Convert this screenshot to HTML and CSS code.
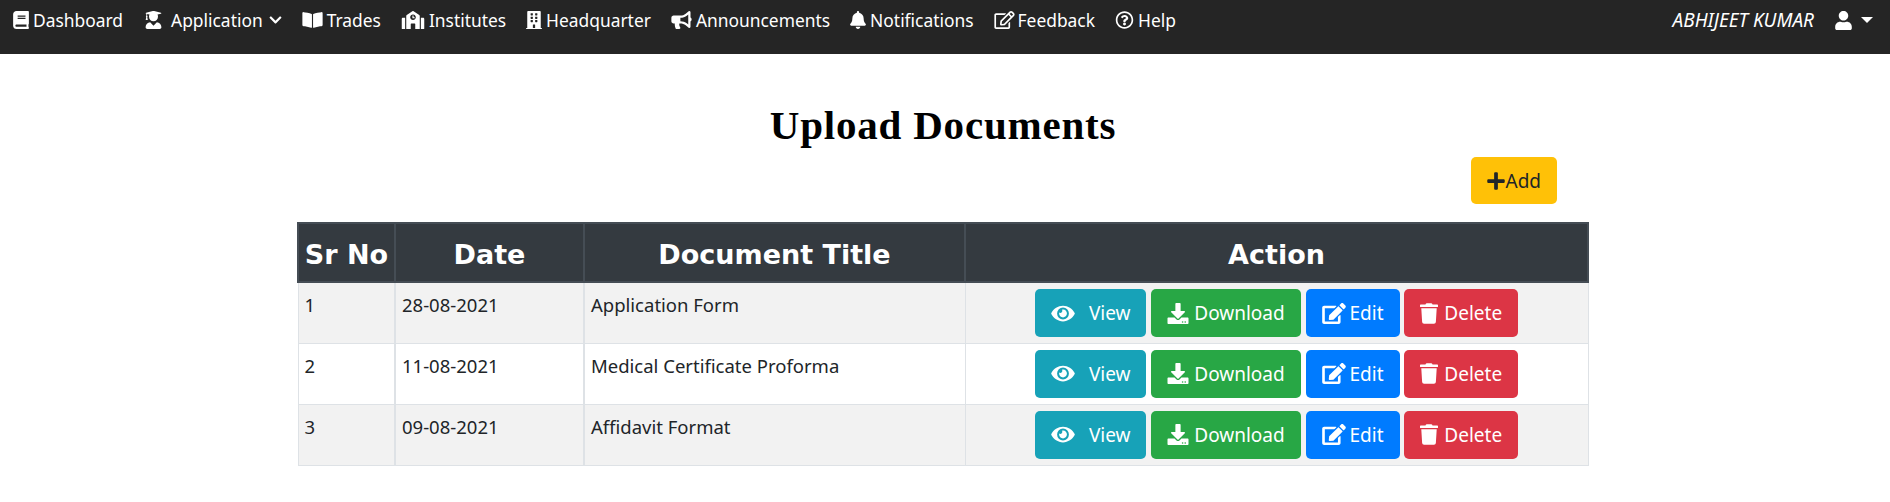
FILE: index.html
```html
<!DOCTYPE html>
<html lang="en">
<head>
    <meta charset="UTF-8">
    <meta name="viewport" content="width=device-width, initial-scale=1.0">
    <title>Upload Documents</title>
    <link rel="stylesheet" href="styles.css">
</head>
<body>
    <svg class="icon-defs" aria-hidden="true">
        <symbol id="i-book" viewBox="0 0 448 512"><path d="M448 360V24c0-13.3-10.7-24-24-24H96C43 0 0 43 0 96v320c0 53 43 96 96 96h328c13.3 0 24-10.7 24-24v-16c0-7.5-3.5-14.3-8.9-18.7-4.2-15.4-4.2-59.3 0-74.7 5.4-4.3 8.9-11.1 8.9-18.6zM128 134c0-3.3 2.7-6 6-6h212c3.3 0 6 2.7 6 6v20c0 3.3-2.7 6-6 6H134c-3.3 0-6-2.7-6-6v-20zm0 64c0-3.3 2.7-6 6-6h212c3.3 0 6 2.7 6 6v20c0 3.3-2.7 6-6 6H134c-3.3 0-6-2.7-6-6v-20zm253.4 250H96c-17.7 0-32-14.3-32-32 0-17.6 14.4-32 32-32h285.4c-1.9 17.1-1.9 46.9 0 64z"/></symbol>
        <symbol id="i-grad" viewBox="0 0 448 512"><path d="M319.4 320.6L224 416l-95.4-95.4C57.1 323.7 0 382.2 0 454.4v9.6c0 26.5 21.5 48 48 48h352c26.5 0 48-21.5 48-48v-9.6c0-72.2-57.1-130.7-128.6-133.8zM13.6 79.8l6.4 1.5v58.4c-7 4.2-12 11.5-12 20.3 0 8.4 4.6 15.4 11.1 19.7L3.5 242c-1.7 6.9 2.1 14 7.6 14h41.8c5.5 0 9.3-7.1 7.6-14l-15.6-62.3C51.4 175.4 56 168.4 56 160c0-8.8-5-16.1-12-20.3V87.1l66 15.9c-8.6 17.2-14 36.4-14 57 0 70.7 57.3 128 128 128s128-57.3 128-128c0-20.6-5.3-39.8-14-57l96.3-23.2c18.2-4.4 18.2-27.1 0-31.5l-190.4-46c-13-3.1-26.7-3.1-39.7 0L13.6 48.2c-18.1 4.4-18.1 27.2 0 31.6z"/></symbol>
        <symbol id="i-chevron" viewBox="0 0 448 512"><path d="M207.029 381.476L12.686 187.132c-9.373-9.373-9.373-24.569 0-33.941l22.667-22.667c9.357-9.357 24.522-9.375 33.901-.04L224 284.505l154.745-154.021c9.379-9.335 24.544-9.317 33.901.04l22.667 22.667c9.373 9.373 9.373 24.569 0 33.941L240.971 381.476c-9.373 9.372-24.569 9.372-33.942 0z"/></symbol>
        <symbol id="i-open" viewBox="0 0 576 512"><path d="M542.22 32.05c-54.8 3.11-163.72 14.43-230.96 55.59-4.64 2.84-7.27 7.89-7.27 13.17v363.87c0 11.55 12.63 18.85 23.28 13.49 69.18-34.82 169.23-44.32 218.7-46.92 16.89-.89 30.02-14.43 30.02-30.66V62.75c.01-17.71-15.35-31.74-33.77-30.7zM264.73 87.64C197.5 46.48 88.58 35.17 33.78 32.05 15.36 31.01 0 45.04 0 62.75V400.6c0 16.24 13.13 29.78 30.02 30.66 49.49 2.6 149.59 12.11 218.77 46.95 10.62 5.35 23.21-1.94 23.21-13.46V100.63c0-5.29-2.62-10.14-7.27-12.99z"/></symbol>
        <symbol id="i-school" viewBox="0 0 640 512"><path d="M0 224v272c0 8.84 7.16 16 16 16h80V192H32c-17.67 0-32 14.33-32 32zm360-48h-24v-40c0-4.42-3.58-8-8-8h-16c-4.42 0-8 3.58-8 8v64c0 4.42 3.58 8 8 8h48c4.42 0 8-3.58 8-8v-16c0-4.42-3.58-8-8-8zm137.75-63.96l-160-106.67a32.02 32.02 0 0 0-35.5 0l-160 106.67A32.002 32.002 0 0 0 128 138.66V512h128V368c0-8.84 7.16-16 16-16h96c8.84 0 16 7.16 16 16v144h128V138.67c0-10.7-5.35-20.7-14.25-26.63zM320 256c-44.18 0-80-35.82-80-80s35.82-80 80-80 80 35.82 80 80-35.82 80-80 80zm288-64h-64v320h80c8.84 0 16-7.16 16-16V224c0-17.67-14.33-32-32-32z"/></symbol>
        <symbol id="i-building" viewBox="0 0 448 512"><path d="M436 480h-20V24c0-13.255-10.745-24-24-24H56C42.745 0 32 10.745 32 24v456H12c-6.627 0-12 5.373-12 12v20h448v-20c0-6.627-5.373-12-12-12zM128 76c0-6.627 5.373-12 12-12h40c6.627 0 12 5.373 12 12v40c0 6.627-5.373 12-12 12h-40c-6.627 0-12-5.373-12-12V76zm0 96c0-6.627 5.373-12 12-12h40c6.627 0 12 5.373 12 12v40c0 6.627-5.373 12-12 12h-40c-6.627 0-12-5.373-12-12v-40zm52 148h-40c-6.627 0-12-5.373-12-12v-40c0-6.627 5.373-12 12-12h40c6.627 0 12 5.373 12 12v40c0 6.627-5.373 12-12 12zm76 160h-64v-84c0-6.627 5.373-12 12-12h40c6.627 0 12 5.373 12 12v84zm64-172c0 6.627-5.373 12-12 12h-40c-6.627 0-12-5.373-12-12v-40c0-6.627 5.373-12 12-12h40c6.627 0 12 5.373 12 12v40zm0-96c0 6.627-5.373 12-12 12h-40c-6.627 0-12-5.373-12-12v-40c0-6.627 5.373-12 12-12h40c6.627 0 12 5.373 12 12v40zm0-96c0 6.627-5.373 12-12 12h-40c-6.627 0-12-5.373-12-12V76c0-6.627 5.373-12 12-12h40c6.627 0 12 5.373 12 12v40z"/></symbol>
        <symbol id="i-bullhorn" viewBox="0 0 576 512"><path d="M576 240c0-23.63-12.95-44.04-32-55.12V32.01C544 23.26 537.02 0 512 0c-7.12 0-14.19 2.38-19.98 7.02l-85.03 68.03C364.28 109.19 310.66 128 256 128H64c-35.35 0-64 28.65-64 64v96c0 35.35 28.65 64 64 64h33.7c-1.39 10.48-2.18 21.14-2.18 32 0 39.77 9.26 77.35 25.56 110.94 5.19 10.69 16.52 17.06 28.4 17.06h74.28c26.05 0 41.69-29.84 25.9-50.56-16.4-21.52-26.15-48.36-26.15-77.44 0-11.11 1.62-21.79 4.41-32H256c54.66 0 108.28 18.81 150.98 52.95l85.03 68.03a32.023 32.023 0 0 0 19.98 7.02c24.92 0 32-22.78 32-32V295.13C563.05 284.04 576 263.63 576 240zm-96 141.42l-33.05-26.44C392.95 311.78 325.12 288 256 288v-96c69.12 0 136.95-23.78 190.95-66.98L480 98.58v282.84z"/></symbol>
        <symbol id="i-bell" viewBox="0 0 448 512"><path d="M224 512c35.32 0 63.97-28.65 63.97-64H160.03c0 35.35 28.65 64 63.97 64zm215.39-149.71c-19.32-20.76-55.47-51.99-55.47-154.29 0-77.7-54.48-139.9-127.94-155.16V32c0-17.67-14.32-32-31.98-32s-31.98 14.33-31.98 32v20.84C118.56 68.1 64.08 130.3 64.08 208c0 102.3-36.15 133.53-55.47 154.29-6 6.45-8.66 14.16-8.61 21.71.11 16.4 12.98 32 32.1 32h383.8c19.12 0 32-15.6 32.1-32 .05-7.55-2.61-15.27-8.61-21.71z"/></symbol>
        <symbol id="i-edit-o" viewBox="0 0 576 512"><path d="M402.3 344.9l32-32c5-5 13.7-1.5 13.7 5.7V464c0 26.5-21.5 48-48 48H48c-26.5 0-48-21.5-48-48V112c0-26.5 21.5-48 48-48h273.5c7.1 0 10.7 8.6 5.7 13.7l-32 32c-1.5 1.5-3.5 2.3-5.7 2.3H48v352h352V350.5c0-2.1.8-4.1 2.3-5.6zm156.6-201.8L296.3 405.7l-90.4 10c-26.2 2.9-48.5-19.2-45.6-45.6l10-90.4L432.9 17.1c22.9-22.9 59.9-22.9 82.7 0l43.2 43.2c22.9 22.9 22.9 60 .1 82.8zM460.1 174L402 115.9 216.2 301.8l-7.3 65.3 65.3-7.3L460.1 174zm64.8-79.7l-43.2-43.2c-4.1-4.1-10.8-4.1-14.8 0L436 82l58.1 58.1 30.9-30.9c4-4.2 4-10.8-.1-14.9z"/></symbol>
        <symbol id="i-help" viewBox="0 0 512 512"><path d="M256 8C119.043 8 8 119.083 8 256c0 136.997 111.043 248 248 248s248-111.003 248-248C504 119.083 392.957 8 256 8zm0 448c-110.532 0-200-89.431-200-200 0-110.495 89.472-200 200-200 110.491 0 200 89.471 200 200 0 110.53-89.431 200-200 200zm107.244-255.2c0 67.052-72.421 68.084-72.421 92.863V300c0 6.627-5.373 12-12 12h-45.647c-6.627 0-12-5.373-12-12v-8.659c0-35.745 27.1-50.034 47.579-61.516 17.561-9.845 28.324-16.541 28.324-29.579 0-17.246-21.999-28.693-39.784-28.693-23.189 0-33.894 10.977-48.942 29.969-4.057 5.12-11.46 6.071-16.666 2.124l-27.824-21.098c-5.107-3.872-6.251-11.066-2.644-16.363C184.846 131.491 214.94 112 261.794 112c49.071 0 101.45 38.304 101.45 88.8zM298 368c0 23.159-18.841 42-42 42s-42-18.841-42-42 18.841-42 42-42 42 18.841 42 42z"/></symbol>
        <symbol id="i-user" viewBox="0 0 448 512"><path d="M224 256c70.7 0 128-57.3 128-128S294.7 0 224 0 96 57.3 96 128s57.3 128 128 128zm89.6 32h-16.7c-22.2 10.2-46.9 16-72.9 16s-50.6-5.8-72.9-16h-16.7C60.2 288 0 348.2 0 422.4V464c0 26.5 21.5 48 48 48h352c26.5 0 48-21.5 48-48v-41.6c0-74.2-60.2-134.4-134.4-134.4z"/></symbol>
        <symbol id="i-plus" viewBox="0 0 448 512"><path d="M416 208H272V64c0-17.67-14.33-32-32-32h-32c-17.67 0-32 14.33-32 32v144H32c-17.67 0-32 14.33-32 32v32c0 17.67 14.33 32 32 32h144v144c0 17.67 14.33 32 32 32h32c17.67 0 32-14.33 32-32V304h144c17.67 0 32-14.33 32-32v-32c0-17.67-14.33-32-32-32z"/></symbol>
        <symbol id="i-eye" viewBox="0 0 576 512"><path d="M572.52 241.4C518.29 135.59 410.93 64 288 64S57.68 135.64 3.48 241.41a32.35 32.35 0 0 0 0 29.19C57.71 376.41 165.07 448 288 448s230.32-71.64 284.52-177.41a32.35 32.35 0 0 0 0-29.19zM288 400a144 144 0 1 1 144-144 143.93 143.93 0 0 1-144 144zm0-240a95.31 95.31 0 0 0-25.31 3.79 47.85 47.85 0 0 1-66.9 66.9A95.78 95.78 0 1 0 288 160z"/></symbol>
        <symbol id="i-download" viewBox="0 0 512 512"><path d="M216 0h80c13.3 0 24 10.7 24 24v168h87.7c17.8 0 26.7 21.5 14.1 34.1L269.7 378.3c-7.5 7.5-19.8 7.5-27.3 0L90.1 226.1c-12.6-12.6-3.7-34.1 14.1-34.1H192V24c0-13.3 10.7-24 24-24zm296 376v112c0 13.3-10.7 24-24 24H24c-13.3 0-24-10.7-24-24V376c0-13.3 10.7-24 24-24h146.7l49 49c20.1 20.1 52.5 20.1 72.6 0l49-49H488c13.3 0 24 10.7 24 24zm-124 88c0-11-9-20-20-20s-20 9-20 20 9 20 20 20 20-9 20-20zm64 0c0-11-9-20-20-20s-20 9-20 20 9 20 20 20 20-9 20-20z"/></symbol>
        <symbol id="i-edit" viewBox="0 0 576 512"><path d="M402.6 83.2l90.2 90.2c3.8 3.8 3.8 10 0 13.8L274.4 405.6l-92.8 10.3c-12.4 1.4-22.9-9.1-21.5-21.5l10.3-92.8L388.8 83.2c3.8-3.8 10-3.8 13.8 0zm162-22.9l-48.8-48.8c-15.2-15.2-39.9-15.2-55.2 0l-35.4 35.4c-3.8 3.8-3.8 10 0 13.8l90.2 90.2c3.8 3.8 10 3.8 13.8 0l35.4-35.4c15.2-15.3 15.2-40 0-55.2zM384 346.2V448H64V128h229.8c3.2 0 6.2-1.3 8.5-3.5l40-40c7.6-7.6 2.2-20.5-8.5-20.5H48C21.5 64 0 85.5 0 112v352c0 26.5 21.5 48 48 48h352c26.5 0 48-21.5 48-48V306.2c0-10.7-12.9-16-20.5-8.5l-40 40c-2.2 2.3-3.5 5.3-3.5 8.5z"/></symbol>
        <symbol id="i-trash" viewBox="0 0 448 512"><path d="M432 32H312l-9.4-18.7A24 24 0 0 0 281.1 0H166.8a23.72 23.72 0 0 0-21.4 13.3L136 32H16A16 16 0 0 0 0 48v32a16 16 0 0 0 16 16h416a16 16 0 0 0 16-16V48a16 16 0 0 0-16-16zM53.2 467a48 48 0 0 0 47.9 45h245.8a48 48 0 0 0 47.9-45L416 128H32z"/></symbol>
    </svg>

    <nav class="navbar">
        <a class="nav-link" href="#"><svg class="nav-icon book"><use href="#i-book"/></svg>Dashboard</a>
        <a class="nav-link" href="#"><svg class="nav-icon grad"><use href="#i-grad"/></svg>Application<svg class="chevron"><use href="#i-chevron"/></svg></a>
        <a class="nav-link" href="#"><svg class="nav-icon wide"><use href="#i-open"/></svg>Trades</a>
        <a class="nav-link" href="#"><svg class="nav-icon school"><use href="#i-school"/></svg>Institutes</a>
        <a class="nav-link" href="#"><svg class="nav-icon book"><use href="#i-building"/></svg>Headquarter</a>
        <a class="nav-link" href="#"><svg class="nav-icon wide"><use href="#i-bullhorn"/></svg>Announcements</a>
        <a class="nav-link" href="#"><svg class="nav-icon book"><use href="#i-bell"/></svg>Notifications</a>
        <a class="nav-link" href="#"><svg class="nav-icon wide feedback"><use href="#i-edit-o"/></svg>Feedback</a>
        <a class="nav-link" href="#"><svg class="nav-icon help"><use href="#i-help"/></svg>Help</a>
        <div class="nav-user">
            <span class="user-name">ABHIJEET KUMAR</span>
            <svg class="user-icon"><use href="#i-user"/></svg>
            <span class="caret"></span>
        </div>
    </nav>

    <main class="content">
        <h1 class="page-title">Upload Documents</h1>
        <div class="add-row">
            <a class="btn btn-add" href="#"><svg class="add-icon"><use href="#i-plus"/></svg>Add</a>
        </div>
        <table class="doc-table">
            <colgroup>
                <col class="col-sr">
                <col class="col-date">
                <col class="col-title">
                <col class="col-action">
            </colgroup>
            <thead>
                <tr>
                    <th>Sr No</th>
                    <th>Date</th>
                    <th>Document Title</th>
                    <th>Action</th>
                </tr>
            </thead>
            <tbody>
                <tr>
                    <td>1</td>
                    <td>28-08-2021</td>
                    <td>Application Form</td>
                    <td class="actions">
                        <a class="btn btn-view" href="#"><svg class="btn-icon eye"><use href="#i-eye"/></svg>View</a>
                        <a class="btn btn-download" href="#"><svg class="btn-icon dl"><use href="#i-download"/></svg>Download</a>
                        <a class="btn btn-edit" href="#"><svg class="btn-icon pen"><use href="#i-edit"/></svg>Edit</a>
                        <a class="btn btn-delete" href="#"><svg class="btn-icon trash"><use href="#i-trash"/></svg>Delete</a>
                    </td>
                </tr>
                <tr>
                    <td>2</td>
                    <td>11-08-2021</td>
                    <td>Medical Certificate Proforma</td>
                    <td class="actions">
                        <a class="btn btn-view" href="#"><svg class="btn-icon eye"><use href="#i-eye"/></svg>View</a>
                        <a class="btn btn-download" href="#"><svg class="btn-icon dl"><use href="#i-download"/></svg>Download</a>
                        <a class="btn btn-edit" href="#"><svg class="btn-icon pen"><use href="#i-edit"/></svg>Edit</a>
                        <a class="btn btn-delete" href="#"><svg class="btn-icon trash"><use href="#i-trash"/></svg>Delete</a>
                    </td>
                </tr>
                <tr>
                    <td>3</td>
                    <td>09-08-2021</td>
                    <td>Affidavit Format</td>
                    <td class="actions">
                        <a class="btn btn-view" href="#"><svg class="btn-icon eye"><use href="#i-eye"/></svg>View</a>
                        <a class="btn btn-download" href="#"><svg class="btn-icon dl"><use href="#i-download"/></svg>Download</a>
                        <a class="btn btn-edit" href="#"><svg class="btn-icon pen"><use href="#i-edit"/></svg>Edit</a>
                        <a class="btn btn-delete" href="#"><svg class="btn-icon trash"><use href="#i-trash"/></svg>Delete</a>
                    </td>
                </tr>
            </tbody>
        </table>
    </main>
</body>
</html>
```

FILE: styles.css
```css
* {
    box-sizing: border-box;
}
body {
    margin: 0;
    background: #fff;
    color: #212529;
    font-family: "Noto Sans", "Open Sans", sans-serif;
}
.icon-defs {
    display: none;
}

/* top bar */
.navbar {
    display: flex;
    align-items: flex-start;
    height: 54px;
    padding: 8px 17px 0 13px;
    background: #252525;
}
.nav-link {
    display: flex;
    align-items: center;
    height: 24px;
    margin-right: 20px;
    color: #fff;
    font-size: 17.4px;
    text-decoration: none;
    white-space: nowrap;
}
.nav-icon {
    width: 18px;
    height: 18px;
    margin-right: 4px;
    fill: #fff;
}
.nav-icon.book {
    width: 16px;
}
.nav-icon.grad {
    width: 17px;
    margin-left: 2px;
    margin-right: 9px;
}
.nav-icon.wide {
    width: 21px;
}
.nav-icon.school {
    width: 24px;
}
.nav-icon.feedback {
    margin-right: 3px;
}
.nav-icon.help {
    width: 19px;
}
.chevron {
    width: 13px;
    height: 14px;
    margin-left: 6px;
    fill: #fff;
}
.nav-user {
    display: flex;
    align-items: center;
    height: 24px;
    margin-left: auto;
    color: #fff;
}
.user-name {
    font-size: 19px;
    font-style: italic;
}
.user-icon {
    width: 17px;
    height: 19px;
    margin-left: 21px;
    fill: #fff;
}
.caret {
    width: 0;
    height: 0;
    margin-left: 9px;
    border-top: 6px solid #fff;
    border-left: 6px solid transparent;
    border-right: 6px solid transparent;
}

/* page body */
.content {
    width: 1292px;
    margin: 0 0 0 297px;
}
.page-title {
    margin: 49px 0 0;
    color: #000;
    font-family: "Liberation Serif", serif;
    font-size: 41px;
    font-weight: 700;
    letter-spacing: 0.8px;
    line-height: 44px;
    text-align: center;
}
.add-row {
    display: flex;
    justify-content: flex-end;
    margin-top: 10px;
    padding-right: 32px;
}
.doc-table {
    width: 100%;
    margin-top: 18px;
    border-collapse: collapse;
    table-layout: fixed;
}
.col-sr {
    width: 97px;
}
.col-date {
    width: 189px;
}
.col-title {
    width: 381px;
}
.doc-table th {
    height: 59px;
    padding: 3px 0 0;
    border: 2px solid #454d55;
    background: #343a40;
    color: #fff;
    font-family: "DejaVu Sans", sans-serif;
    font-size: 27px;
    font-weight: 700;
    text-align: center;
}
.doc-table td {
    height: 61px;
    padding: 9px 6px;
    border: 1px solid #dee2e6;
    font-size: 18.5px;
    vertical-align: top;
}
.doc-table td:nth-child(-n+2) {
    border-right-width: 2px;
}
.doc-table tbody tr:nth-child(odd) {
    background: #f2f2f2;
}
.doc-table td.actions {
    padding: 6px 0 0;
    text-align: center;
}

/* buttons */
.btn {
    display: inline-flex;
    align-items: center;
    height: 48px;
    padding: 0 16px;
    border-radius: 5px;
    color: #fff;
    font-size: 19px;
    text-decoration: none;
    vertical-align: top;
}
.btn-icon {
    width: 24px;
    height: 21px;
    margin-right: 6px;
    fill: #fff;
}
.btn-icon.eye {
    margin-right: 14px;
}
.btn-icon.dl {
    width: 22px;
    margin-right: 5px;
}
.btn-icon.pen {
    margin-right: 4px;
}
.btn-icon.trash {
    width: 18px;
}
.btn-view {
    background: #17a2b8;
}
.btn-download {
    background: #28a745;
}
.btn-edit {
    background: #007bff;
}
.btn-delete {
    background: #dc3545;
}
.btn-add {
    height: 47px;
    background: #ffc107;
    color: #212529;
    font-size: 19px;
}
.add-icon {
    width: 18px;
    height: 20px;
    fill: #212529;
}
```
